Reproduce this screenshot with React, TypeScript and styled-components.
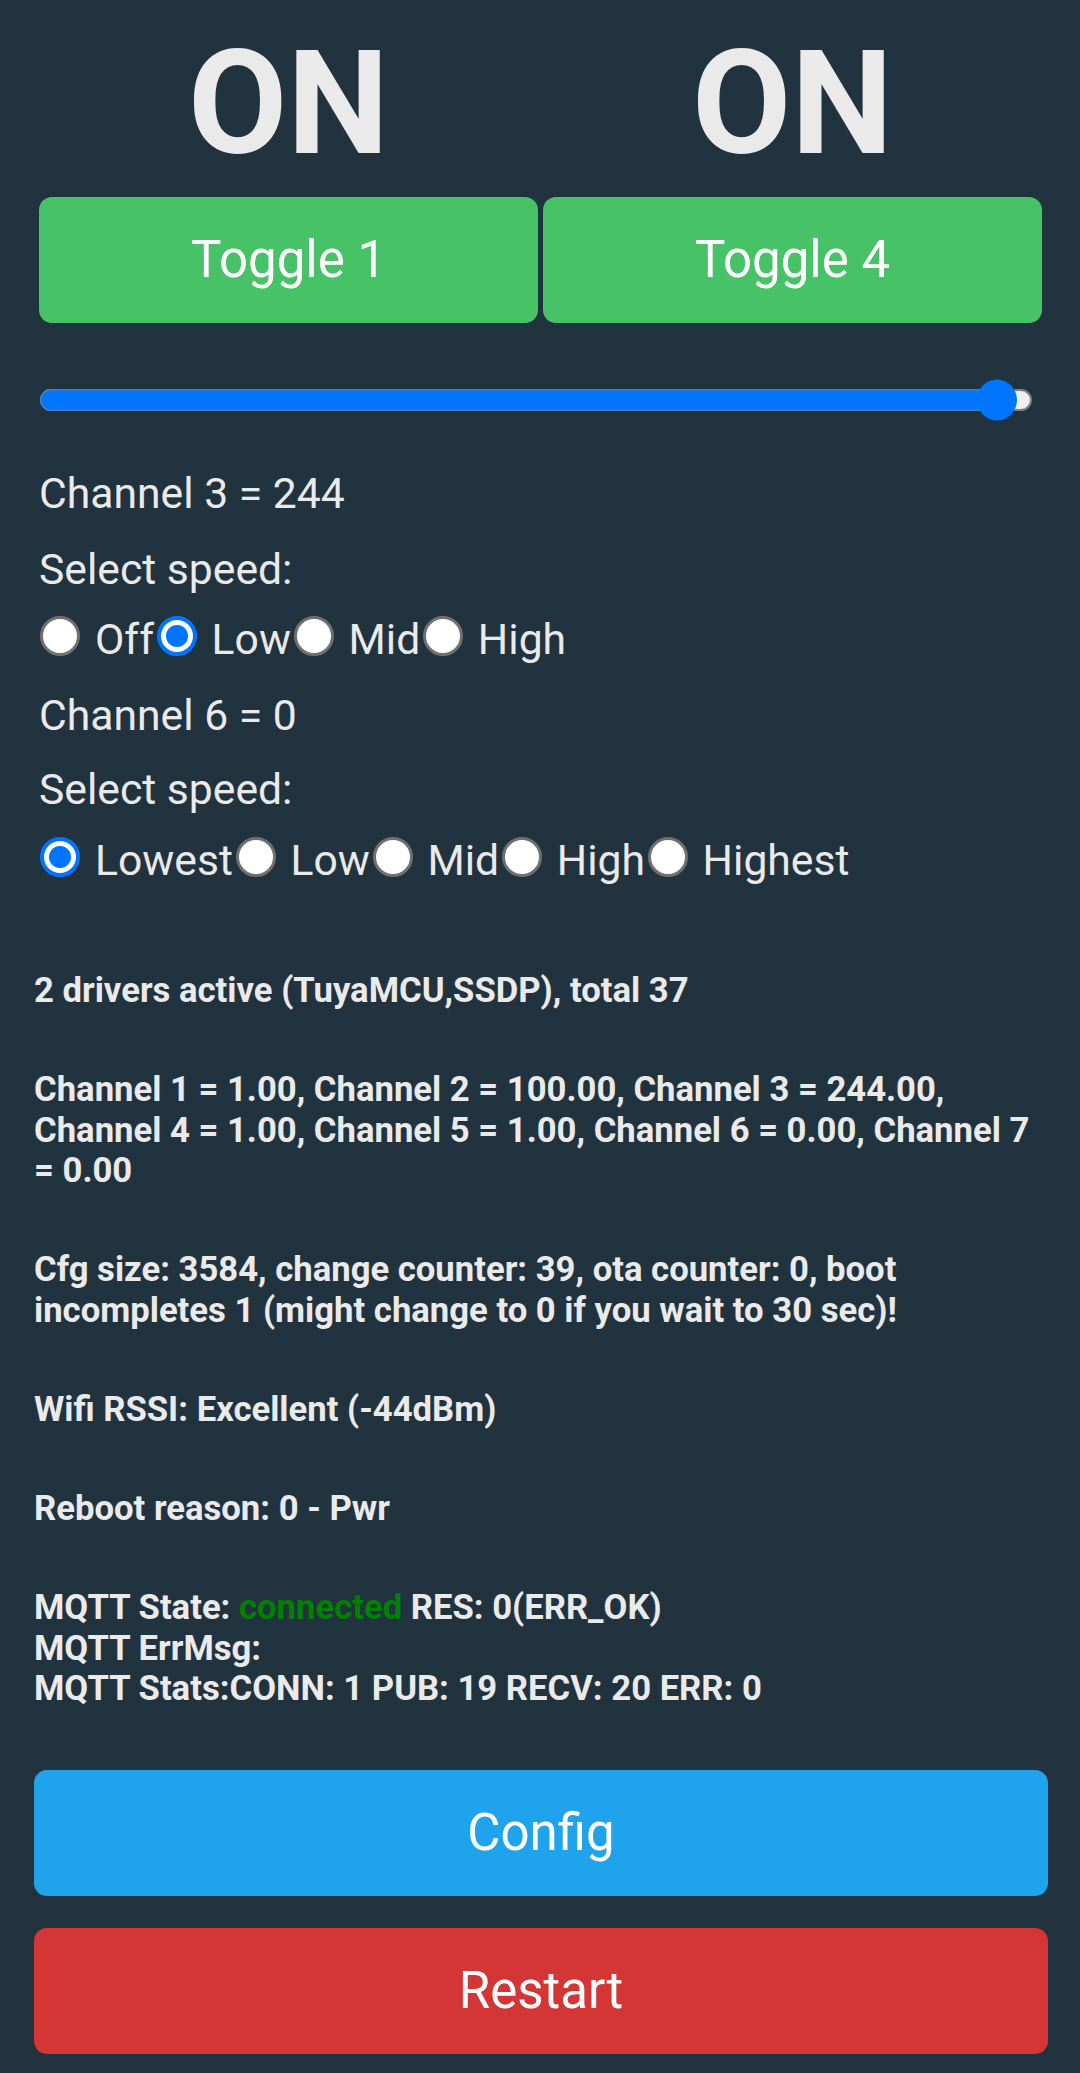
import React from "react";
import styled, { createGlobalStyle, css } from "styled-components";

const GlobalStyle = createGlobalStyle`
  html, body {
    margin: 0;
    padding: 0;
    background: #223340;
  }
  body {
    font-family: Roboto, "Noto Sans", "Liberation Sans", sans-serif;
    color: #eaeaea;
  }
  * { box-sizing: border-box; }
`;

const Page = styled.div`
  width: 1080px;
  min-height: 2073px;
  background: #223340;
  padding: 19px 0 18px;
  display: flex;
  flex-direction: column;
`;

const TopSection = styled.section`
  padding: 0 38px 0 39px;
  display: flex;
  flex-direction: column;
`;

const StateGrid = styled.div`
  display: grid;
  grid-template-columns: 1fr 1fr;
  column-gap: 5px;
`;

const StateText = styled.div`
  font-size: 144px;
  font-weight: 700;
  line-height: 169px;
  text-align: center;
  color: #eaeaea;
`;

const ButtonGrid = styled.div`
  display: grid;
  grid-template-columns: 1fr 1fr;
  column-gap: 5px;
  margin-top: 9px;
`;

type Tone = "green" | "blue" | "red";
const toneColor: Record<Tone, string> = {
  green: "#47c266",
  blue: "#1fa3ec",
  red: "#d43535",
};

const ActionButton = styled.button<{ $tone: Tone }>`
  display: block;
  width: 100%;
  height: 126px;
  border: 0;
  border-radius: 13px;
  padding: 0;
  margin: 0;
  font-family: Roboto, "Noto Sans", sans-serif;
  font-size: 51px;
  font-weight: 400;
  line-height: 126px;
  color: #ffffff;
  text-align: center;
  cursor: pointer;
  ${({ $tone }) => css`
    background: ${toneColor[$tone]};
  `}
`;

const SliderBox = styled.div`
  position: relative;
  height: 42px;
  margin: 56px 10px 0 1px;
  display: flex;
  align-items: center;
`;

const SliderTrack = styled.div`
  position: relative;
  width: 100%;
  height: 22px;
  border-radius: 11px;
  background: #efefef;
  border: 2px solid #7a7f86;
`;

const SliderFill = styled.div`
  position: absolute;
  left: -2px;
  top: -2px;
  bottom: -2px;
  border-radius: 11px 0 0 11px;
  background: #0075ff;
  box-shadow: inset 0 0 0 1.5px #4f7fae;
`;

const SliderThumb = styled.div`
  position: absolute;
  top: 50%;
  width: 40px;
  height: 41px;
  border-radius: 50%;
  background: #0075ff;
  transform: translate(-50%, -50%);
`;

const TextLine = styled.div<{ $gap: number }>`
  font-size: 42.67px;
  line-height: 50px;
  height: 50px;
  margin-top: ${({ $gap }) => $gap}px;
  white-space: nowrap;
  color: #eaeaea;
`;

const RadioRow = styled.div<{ $gap: number }>`
  display: flex;
  align-items: center;
  height: 50px;
  margin-top: ${({ $gap }) => $gap}px;
  font-size: 42.67px;
  line-height: 50px;
  white-space: nowrap;
`;

const Radio = styled.input.attrs({ type: "radio" })`
  appearance: none;
  -webkit-appearance: none;
  flex: none;
  width: 40px;
  height: 40px;
  margin: 0 15px 7px 2.6px;
  border-radius: 50%;
  background: #ffffff;
  border: 3px solid #707070;
  &:first-child {
    margin-left: 1px;
  }
  &:checked {
    border: 4px solid #0075ff;
    background: radial-gradient(circle, #0075ff 0 10.5px, #ffffff 11.5px);
  }
`;

const RadioLabel = styled.span`
  color: #eaeaea;
`;

const InfoSection = styled.section`
  padding: 0 32px 0 34px;
  margin-top: 85px;
  display: flex;
  flex-direction: column;
  gap: 58.5px;
`;

const InfoBlock = styled.div`
  font-size: 34.67px;
  font-weight: 700;
  line-height: 40.6px;
  color: #eaeaea;
`;

const StatusWord = styled.span`
  color: #008000;
`;

const ButtonStack = styled.div`
  display: flex;
  flex-direction: column;
  gap: 32px;
  padding: 0 32px 0 34px;
  margin-top: 61px;
`;

type SpeedGroupProps = {
  name: string;
  options: string[];
  selected: number;
  gap: number;
};

const SpeedGroup: React.FC<SpeedGroupProps> = ({ name, options, selected, gap }) => (
  <RadioRow $gap={gap}>
    {options.map((opt, i) => (
      <React.Fragment key={opt}>
        <Radio name={name} defaultChecked={i === selected} aria-label={opt} />
        <RadioLabel>{opt}</RadioLabel>
      </React.Fragment>
    ))}
  </RadioRow>
);

const sliderValue = 244;
const sliderMax = 252;

export default function App() {
  const pct = (sliderValue / sliderMax) * 100;
  return (
    <>
      <GlobalStyle />
      <Page>
        <TopSection>
          <StateGrid>
            <StateText>ON</StateText>
            <StateText>ON</StateText>
          </StateGrid>
          <ButtonGrid>
            <ActionButton $tone="green">Toggle 1</ActionButton>
            <ActionButton $tone="green">Toggle 4</ActionButton>
          </ButtonGrid>
          <SliderBox>
            <SliderTrack>
              <SliderFill style={{ width: `calc(${pct}% + 2px)` }} />
              <SliderThumb style={{ left: `calc(${pct}% - 2px)` }} />
            </SliderTrack>
          </SliderBox>
          <TextLine $gap={47}>Channel 3 = 244</TextLine>
          <TextLine $gap={26}>Select speed:</TextLine>
          <SpeedGroup name="ch3" options={["Off", "Low", "Mid", "High"]} selected={1} gap={20} />
          <TextLine $gap={26}>Channel 6 = 0</TextLine>
          <TextLine $gap={24}>Select speed:</TextLine>
          <SpeedGroup
            name="ch6"
            options={["Lowest", "Low", "Mid", "High", "Highest"]}
            selected={0}
            gap={21}
          />
        </TopSection>
        <InfoSection>
          <InfoBlock>2 drivers active (TuyaMCU,SSDP), total 37</InfoBlock>
          <InfoBlock>
            Channel 1 = 1.00, Channel 2 = 100.00, Channel 3 = 244.00, Channel 4 = 1.00, Channel 5 =
            1.00, Channel 6 = 0.00, Channel 7 = 0.00
          </InfoBlock>
          <InfoBlock>
            Cfg size: 3584, change counter: 39, ota counter: 0, boot incompletes 1 (might change to 0
            if you wait to 30 sec)!
          </InfoBlock>
          <InfoBlock>Wifi RSSI: Excellent (-44dBm)</InfoBlock>
          <InfoBlock>Reboot reason: 0 - Pwr</InfoBlock>
          <InfoBlock>
            MQTT State: <StatusWord>connected</StatusWord> RES: 0(ERR_OK)
            <br />
            MQTT ErrMsg:
            <br />
            MQTT Stats:CONN: 1 PUB: 19 RECV: 20 ERR: 0
          </InfoBlock>
        </InfoSection>
        <ButtonStack>
          <ActionButton $tone="blue">Config</ActionButton>
          <ActionButton $tone="red">Restart</ActionButton>
        </ButtonStack>
      </Page>
    </>
  );
}
